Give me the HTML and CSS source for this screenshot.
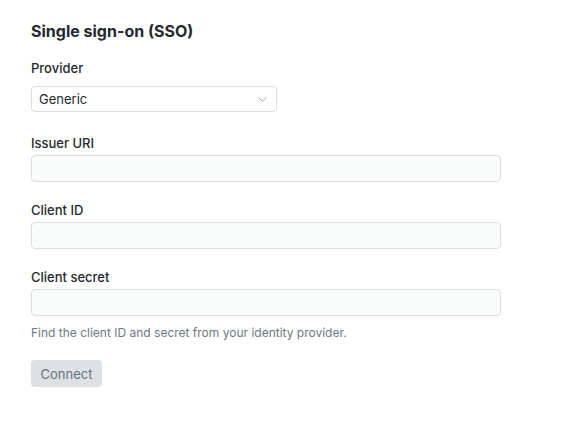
FILE: index.html
```html
<!DOCTYPE html>
<html lang="en">
<head>
<meta charset="utf-8">
<title>Single sign-on (SSO)</title>
<link rel="stylesheet" href="styles.css">
</head>
<body>
<main class="page">
  <h1 class="title">Single sign-on (SSO)</h1>
  <form class="form">
    <div class="field field-select">
      <label class="label" for="provider">Provider</label>
      <div class="select">
        <span class="select-value">Generic</span>
        <svg class="chevron" width="9" height="5" viewBox="0 0 9 5" aria-hidden="true"><path d="M0.8 0.8l3.7 3.4 3.7-3.4" fill="none" stroke="#9aa1a7" stroke-width="1" stroke-linecap="round" stroke-linejoin="round"/></svg>
      </div>
    </div>
    <div class="field">
      <label class="label" for="issuer">Issuer URI</label>
      <input class="input" id="issuer" type="text">
    </div>
    <div class="field">
      <label class="label" for="client-id">Client ID</label>
      <input class="input" id="client-id" type="text">
    </div>
    <div class="field field-last">
      <label class="label" for="client-secret">Client secret</label>
      <input class="input" id="client-secret" type="text">
      <p class="help">Find the client ID and secret from your identity provider.</p>
    </div>
    <button class="button" type="button">Connect</button>
  </form>
</main>
</body>
</html>
```
FILE: styles.css
```css
* { box-sizing: border-box; }
html, body { margin: 0; background: #ffffff; }
body {
  font-family: Inter, "Liberation Sans", sans-serif;
  color: #1f2328;
  -webkit-font-smoothing: antialiased;
}
.page {
  padding: 21px 31px 0 31px;
  width: 470px;
  box-sizing: content-box;
}
.title {
  margin: 0;
  font-size: 16px;
  line-height: 20px;
  font-weight: 700;
  color: #24292e;
}
.form {
  display: flex;
  flex-direction: column;
  margin-top: 19px;
}
.field {
  display: flex;
  flex-direction: column;
  margin-bottom: 20px;
}
.field-select { margin-bottom: 23px; }
.field-last { margin-bottom: 19px; }
.label {
  font-size: 13px;
  line-height: 16px;
  font-weight: 500;
  color: #24292e;
  margin-bottom: 4px;
}
.select {
  margin-top: 6px;
  width: 246px;
  height: 26px;
  border: 1px solid #dadde1;
  border-radius: 4px;
  background: #ffffff;
  display: flex;
  align-items: center;
  justify-content: space-between;
  padding: 0 9px 0 7px;
  font-size: 13px;
  color: #24292e;
}
.chevron { display: block; }
.input {
  width: 470px;
  height: 27px;
  border: 1px solid #dadde1;
  border-radius: 4px;
  background: #fafbfb;
  margin: 0;
  font: inherit;
}
.help {
  margin: 9px 0 0 0;
  font-size: 12px;
  line-height: 16px;
  color: #6b7a84;
}
.button {
  align-self: flex-start;
  width: 71px;
  height: 27px;
  border: 0;
  border-radius: 4px;
  background: #dde1e4;
  color: #68737c;
  font-family: inherit;
  font-size: 13px;
  padding: 0;
}
```
